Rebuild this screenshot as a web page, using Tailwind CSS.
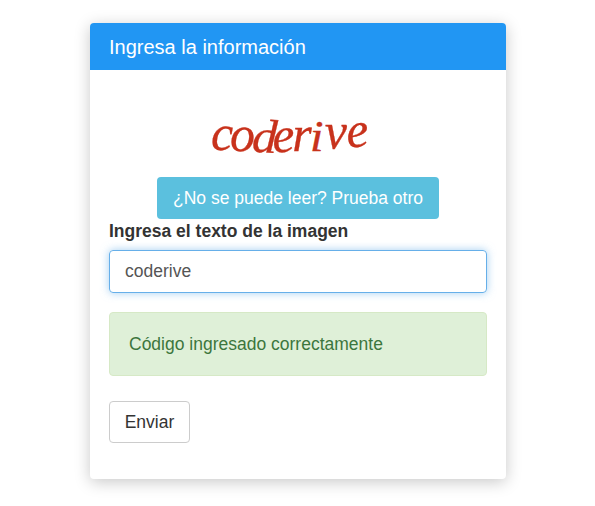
<!DOCTYPE html>
<html lang="es">
<head>
    <meta charset="UTF-8">
    <title>Captcha</title>
    <script src="https://cdn.jsdelivr.net/npm/@tailwindcss/browser@4"></script>
</head>
<body class="bg-white font-['Liberation_Sans',Arial,sans-serif] text-[#333]">
    <div class="w-[595px] h-[506px] pt-[23px] pl-[90px] overflow-hidden">
        <div class="w-[416px] h-[456px] bg-white rounded-[4px] overflow-hidden shadow-[0_3px_16px_rgba(0,0,0,0.22)]">
            <!-- Header -->
            <div class="h-[47px] bg-[#2196f3] pl-[19px] flex items-center text-white text-[20px]">Ingresa la información</div>

            <div class="px-[19px]">
                <!-- Captcha -->
                <div class="h-[107px] pt-[38px] flex justify-center">
                    <div class="h-[50px] flex items-end text-[#c8321c] font-['Liberation_Serif',serif] italic text-[50px] leading-[50px] tracking-[-1px] ml-[-18px] [-webkit-text-stroke:0.3px_#c8321c]">
                        <span class="inline-block">c</span>
                        <span class="inline-block ml-[-2px] translate-y-[1px]">o</span>
                        <span class="inline-block ml-[-3px] translate-y-[2px] rotate-[3deg] origin-bottom scale-y-[0.95]">d</span>
                        <span class="inline-block ml-[-3px] translate-y-[2px] rotate-[-3deg]">e</span>
                        <span class="inline-block ml-[-1px] translate-y-[1px]">r</span>
                        <span class="inline-block ml-[-1px] origin-bottom scale-y-[0.9]">i</span>
                        <span class="inline-block ml-[2px] translate-y-[-2px]">v</span>
                        <span class="inline-block translate-y-[-3px] rotate-[-5deg]">e</span>
                    </div>
                </div>

                <div class="flex justify-center">
                    <button class="w-[282px] h-[42px] bg-[#5bc0de] rounded-[4px] text-white text-[17.5px]">¿No se puede leer? Prueba otro</button>
                </div>

                <label class="block mt-[2px] h-[29px] font-bold text-[17.5px] leading-[20px] text-[#333]">Ingresa el texto de la imagen</label>

                <input value="coderive" class="block w-[378px] h-[43px] px-[15px] rounded-[4px] border border-[#66afe9] text-[17.5px] text-[#555] outline-none shadow-[0_0_8px_rgba(102,175,233,0.6)]">

                <div class="mt-[19px] w-[378px] h-[64px] pl-[19px] flex items-center bg-[#dff0d8] border border-[#d6e9c6] rounded-[4px] text-[17.5px] text-[#3c763d]">Código ingresado correctamente</div>

                <button class="block mt-[25px] w-[81px] h-[42px] bg-white border border-[#ccc] rounded-[4px] text-[17.5px] text-[#333]">Enviar</button>
            </div>
        </div>
    </div>
</body>
</html>
